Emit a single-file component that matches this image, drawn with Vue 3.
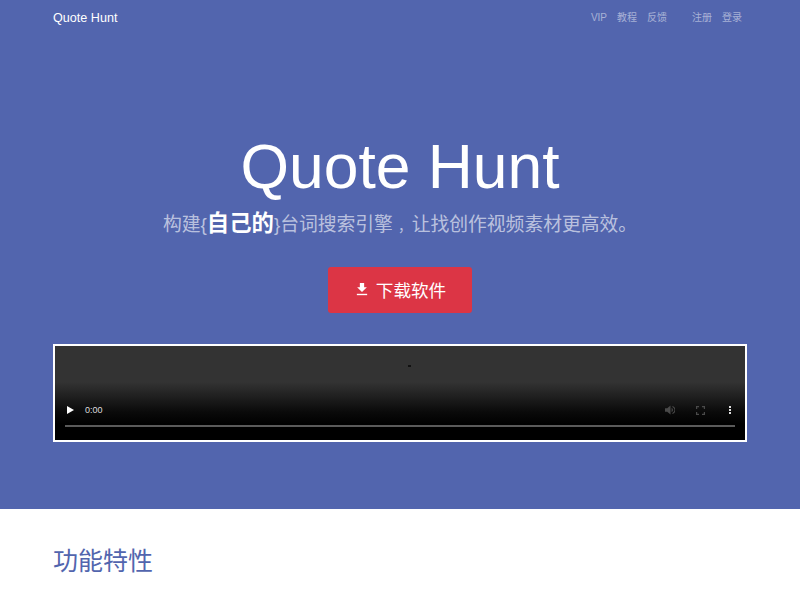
<script setup>
const leftLinks = ['VIP', '教程', '反馈']
const rightLinks = ['注册', '登录']
</script>

<template>
  <div class="page">
    <section class="hero">
      <nav class="nav">
        <a class="brand">Quote Hunt</a>
        <div class="links">
          <div class="group">
            <a v-for="l in leftLinks" :key="l">{{ l }}</a>
          </div>
          <div class="group">
            <a v-for="l in rightLinks" :key="l">{{ l }}</a>
          </div>
        </div>
      </nav>
      <div class="intro">
        <h1>Quote Hunt</h1>
        <p class="lead">构建{<strong>自己的</strong>}台词搜索引擎<span class="comma">，</span>让找创作视频素材更高效。</p>
        <a class="btn">
          <svg class="dl" viewBox="0 0 14 16" width="12" height="14" aria-hidden="true">
            <path d="M4.5 1h5v5h3.2L7 11.6 1.300 6h3.200z" fill="currentColor" />
            <rect x="1" y="13.600" width="12" height="1.600" fill="currentColor" />
          </svg>
          <span>下载软件</span>
        </a>
      </div>
      <div class="video">
        <i class="spin"></i>
        <div class="controls">
          <svg class="play" viewBox="0 0 7 8" width="7" height="8" aria-hidden="true">
            <path d="M0 0l7 4-7 4z" fill="#fff" />
          </svg>
          <span class="time">0:00</span>
          <svg class="vol" viewBox="0 0 10 10" width="10" height="10" aria-hidden="true">
            <path d="M0 3.300h2.200L5.500 .5v9L2.200 6.700H0zM6.600 2.700a2.600 2.600 0 0 1 0 4.600zM7.400 .9a4.300 4.300 0 0 1 0 8.200V8a3.200 3.200 0 0 0 0-6z" fill="#4a4a4a" />
          </svg>
          <svg class="full" viewBox="0 0 9 9" width="9" height="9" aria-hidden="true">
            <path d="M.6 3V.6H3M6 .6h2.400V3M8.400 6v2.400H6M3 8.400H.6V6" fill="none" stroke="#4a4a4a" stroke-width="1.200" />
          </svg>
          <svg class="more" viewBox="0 0 2 8" width="2" height="8" aria-hidden="true">
            <path d="M0 0h2v2H0zM0 3h2v2H0zM0 6h2v2H0z" fill="#ddd" />
          </svg>
        </div>
        <div class="track"></div>
      </div>
    </section>
    <section class="features">
      <h2>功能特性</h2>
    </section>
  </div>
</template>

<style>
html, body { margin: 0; background: #fff; }
</style>

<style scoped>
.page {
  font-family: "Liberation Sans", "Noto Sans CJK SC", sans-serif;
  height: 600px;
  overflow: hidden;
}
.hero {
  background: #5265ae;
  height: 509px;
  padding: 0 53px;
  box-sizing: border-box;
  display: flex;
  flex-direction: column;
}
.nav {
  display: flex;
  align-items: flex-start;
  justify-content: space-between;
  height: 34px;
  padding-top: 10px;
  box-sizing: border-box;
}
.brand { color: #fff; font-size: 12.600px; line-height: 17px; }
.links { display: flex; align-items: baseline; gap: 25px; padding-right: 5px; line-height: 15px; }
.group { display: flex; align-items: baseline; gap: 10px; }
.group a { color: rgba(255, 255, 255, 0.5); font-size: 10px; }
.intro {
  display: flex;
  flex-direction: column;
  align-items: center;
  padding-top: 95px;
}
h1 {
  margin: 0;
  color: #fff;
  font-size: 62.400px;
  font-weight: 400;
  line-height: 76px;
}
.lead {
  margin: 4px 0 0;
  color: rgba(255, 255, 255, 0.62);
  font-size: 18.800px;
  line-height: 30px;
  white-space: nowrap;
}
.lead strong { color: #fff; font-size: 22.400px; font-weight: 700; }
.comma { padding-left: 5px; font-size: 13.800px; }
.btn {
  display: flex;
  align-items: center;
  gap: 8px;
  margin-top: 25px;
  width: 144px;
  height: 46px;
  box-sizing: border-box;
  justify-content: center;
  padding: 0 0 2px 2px;
  background: #dc3545;
  border-radius: 3px;
  color: #fff;
  font-size: 17.600px;
}
.dl { display: block; }
.video {
  position: relative;
  display: flex;
  flex-direction: column;
  justify-content: flex-end;
  margin-top: 31px;
  width: 694px;
  height: 98px;
  box-sizing: border-box;
  border: 2px solid #fff;
  padding-bottom: 13px;
  background: linear-gradient(#333 0, #333 36px, #0a0a0a 66px, #000 78px);
}
.spin {
  position: absolute;
  left: 353px;
  top: 19px;
  width: 3px;
  height: 2px;
  background: #111;
}
.controls {
  display: flex;
  align-items: center;
  height: 10px;
  padding: 0 14px 0 12px;
}
.time {
  margin-left: 11px;
  color: #ddd;
  font-family: "Liberation Sans", sans-serif;
  font-size: 9px;
}
.vol { margin-left: auto; }
.full { margin-left: 21px; }
.more { margin-left: 24px; }
.track {
  height: 2px;
  margin: 10px 10px 0;
  background: #5a5a5a;
}
.features { padding: 34px 53px 0; }
h2 {
  margin: 0;
  color: #5265ae;
  font-size: 25px;
  font-weight: 400;
  line-height: 36px;
}
</style>
